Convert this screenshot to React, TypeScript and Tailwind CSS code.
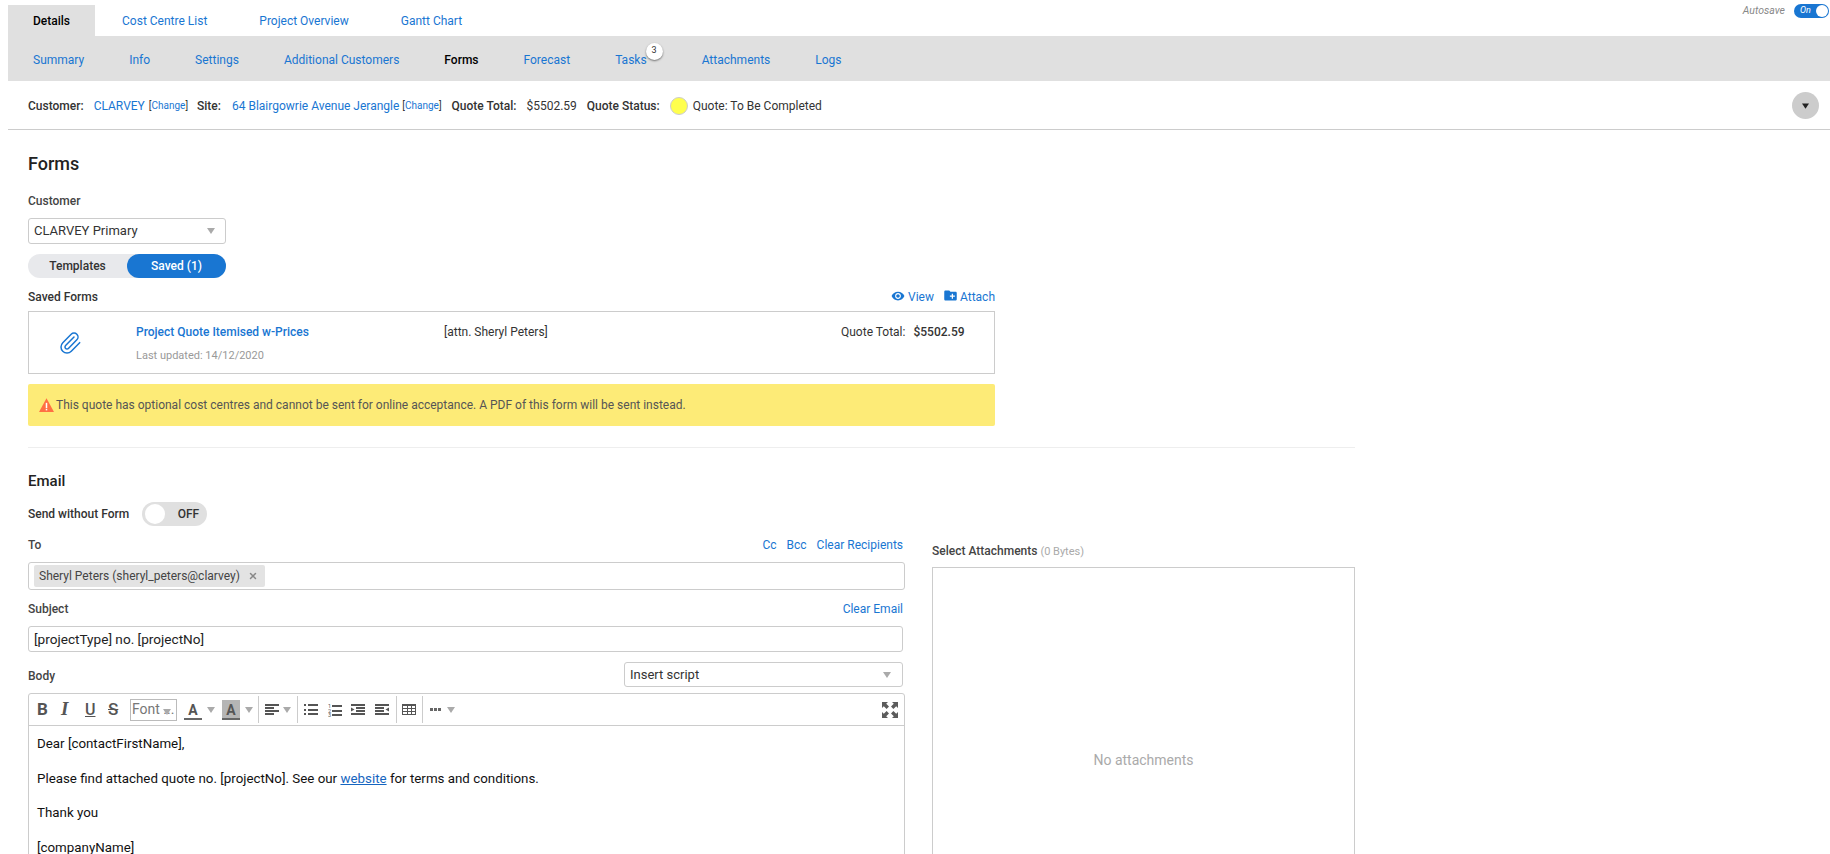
import { MdRemoveRedEye, MdCreateNewFolder } from "react-icons/md";
import { Paperclip, X } from "lucide-react";

const subTabs = ["Summary", "Info", "Settings", "Additional Customers", "Forms", "Forecast", "Tasks", "Attachments", "Logs"];

function Caret({ className = "" }: { className?: string }) {
  return (
    <svg viewBox="0 0 8 6" className={`h-[6px] w-[8px] shrink-0 ${className}`} fill="#aaa">
      <path d="M0 0h8L4 6z" />
    </svg>
  );
}

function Sep({ className = "" }: { className?: string }) {
  return <div className={`h-[27px] w-px shrink-0 bg-[#ccc] ${className}`} />;
}

function AlignIcon() {
  return (
    <svg viewBox="0 0 14 11" className="ml-[6px] h-[11px] w-[14px] shrink-0" fill="#555" shapeRendering="crispEdges">
      <path d="M0 0h14v2H0zM0 3h9v2H0zM0 6h14v2H0zM0 9h9v2H0z" />
    </svg>
  );
}

function BulletIcon() {
  return (
    <svg viewBox="0 0 14 11" className="ml-[6px] h-[11px] w-[14px] shrink-0" fill="#555" shapeRendering="crispEdges">
      <path d="M0 0h2v2H0zM4 0h10v2H4zM0 4.5h2v2H0zM4 4.5h10v2H4zM0 9h2v2H0zM4 9h10v2H4z" />
    </svg>
  );
}

function NumberIcon() {
  return (
    <svg viewBox="0 0 14 14" className="ml-[10px] h-[14px] w-[14px] shrink-0" fill="#555">
      <path d="M4 2h10v2H4zM4 6.5h10v2H4zM4 11h10v2H4z" shapeRendering="crispEdges" />
      <text x="0" y="5" fontSize="5.5" fontFamily="Roboto, sans-serif">1</text>
      <text x="0" y="9.5" fontSize="5.5" fontFamily="Roboto, sans-serif">2</text>
      <text x="0" y="14" fontSize="5.5" fontFamily="Roboto, sans-serif">3</text>
    </svg>
  );
}

function IndentIcon({ className = "" }: { className?: string }) {
  return (
    <svg viewBox="0 0 14 11" className={`h-[11px] w-[14px] shrink-0 ${className}`} fill="#555" shapeRendering="crispEdges">
      <path d="M0 0h14v2H0zM5 3h9v2H5zM5 6h9v2H5zM0 9h14v2H0z" />
      <path d="M0 3.5 3.5 5.5 0 7.5z" shapeRendering="auto" />
    </svg>
  );
}

function OutdentIcon({ className = "" }: { className?: string }) {
  return (
    <svg viewBox="0 0 14 11" className={`h-[11px] w-[14px] shrink-0 ${className}`} fill="#555" shapeRendering="crispEdges">
      <path d="M0 0h14v2H0zM0 3h9v2H0zM0 6h9v2H0zM0 9h14v2H0z" />
      <path d="M14 3.5 10.5 5.5 14 7.5z" shapeRendering="auto" />
    </svg>
  );
}

function TableIcon() {
  return (
    <svg viewBox="0 0 14 11" className="ml-[5px] h-[11px] w-[14px] shrink-0" fill="none" stroke="#555" strokeWidth="1" shapeRendering="crispEdges">
      <rect x="0.5" y="0.5" width="13" height="10" />
      <path d="M0 4h14M0 7.5h14M5 0v11M9.5 0v11" />
      <rect x="0" y="0" width="14" height="2" fill="#555" stroke="none" />
    </svg>
  );
}

function DotsIcon() {
  return (
    <svg viewBox="0 0 11 3" className="ml-[7px] h-[3px] w-[11px] shrink-0" fill="#666" shapeRendering="crispEdges">
      <path d="M0 0h3v3H0zM4 0h3v3H4zM8 0h3v3H8z" />
    </svg>
  );
}

function ExpandIcon() {
  return (
    <svg viewBox="0 0 16 16" className="ml-auto h-[16px] w-[16px] shrink-0" fill="#5c5c5c">
      <path d="M0 0h6L4.2 1.8 7 4.6 4.6 7 1.8 4.2 0 6z" />
      <path d="M16 0h-6l1.8 1.8L9 4.6 11.4 7l2.8-2.8L16 6z" />
      <path d="M0 16h6l-1.8-1.8L7 11.4 4.6 9l-2.8 2.8L0 10z" />
      <path d="M16 16h-6l1.8-1.8L9 11.4 11.4 9l2.8 2.8L16 10z" />
    </svg>
  );
}

function Toolbar() {
  return (
    <div className="flex h-[32px] items-center border-b border-[#ccc] pl-[8px] pr-[6px] text-[#555]">
      <span className="w-[23px] shrink-0 text-[17px] font-bold">B</span>
      <span className="w-[25px] shrink-0 pl-[1px] text-[19px] font-bold italic [font-family:'Liberation_Serif',serif]">I</span>
      <span className="w-[23px] shrink-0 text-[16px] font-medium underline">U</span>
      <span className="w-[22px] shrink-0 text-[17px] font-medium line-through">S</span>
      <div className="relative flex h-[22px] w-[47px] shrink-0 items-center overflow-hidden border border-[#bbb] pl-[1px] text-[14px] whitespace-nowrap text-[#777]">
        Font ...
        <Caret className="absolute right-[5px] top-[9px]" />
      </div>
      <div className="ml-[7px] flex h-[20px] w-[18px] shrink-0 flex-col items-center justify-end text-[14px] leading-[16px] font-bold">
        A
        <div className="h-[2px] w-full bg-[#666]" />
      </div>
      <Caret className="ml-[5px]" />
      <div className="ml-[7px] flex h-[20px] w-[18px] shrink-0 flex-col items-center justify-end bg-[#b5b5b5] text-[14px] leading-[16px] font-bold">
        A
        <div className="h-[2px] w-full bg-[#666]" />
      </div>
      <Caret className="ml-[5px]" />
      <Sep className="ml-[5px]" />
      <AlignIcon />
      <Caret className="ml-[4px]" />
      <Sep className="ml-[6px]" />
      <BulletIcon />
      <NumberIcon />
      <IndentIcon className="ml-[9px]" />
      <OutdentIcon className="ml-[10px]" />
      <Sep className="ml-[7px]" />
      <TableIcon />
      <Sep className="ml-[6px]" />
      <DotsIcon />
      <Caret className="ml-[6px]" />
      <ExpandIcon />
    </div>
  );
}

export default function App() {
  return (
    <div className="h-screen overflow-hidden bg-white pl-2 text-[12px] text-[#333] [font-family:Roboto,sans-serif]">
      {/* top tabs */}
      <div className="flex h-[36px] items-start justify-between pr-px">
        <div className="mt-[5px] flex h-[31px] gap-[2px]">
          <div className="flex items-center bg-[#e0e0e0] px-[25px] font-medium text-black">Details</div>
          <div className="flex items-center px-[25px] text-[#1976d2]">Cost Centre List</div>
          <div className="flex items-center px-[25px] text-[#1976d2]">Project Overview</div>
          <div className="flex items-center px-[25px] text-[#1976d2]">Gantt Chart</div>
        </div>
        <div className="mt-[3px] flex items-center gap-[9px]">
          <span className="text-[10.5px] italic text-[#888]">Autosave</span>
          <div className="flex h-[14px] w-[35px] items-center justify-between rounded-full bg-[#1976d2] pl-[6px] pr-[1px]">
            <span className="text-[9px] italic text-white">On</span>
            <div className="h-[12px] w-[12px] rounded-full bg-white" />
          </div>
        </div>
      </div>

      {/* sub tabs */}
      <div className="flex h-[45px] items-center gap-[45px] bg-[#e0e0e0] pl-[25px] pt-[2px]">
        {subTabs.map((t) => (
          <div key={t} className={t === "Forms" ? "relative font-medium text-black" : t === "Tasks" ? "relative mr-[10px] text-[#1976d2]" : "relative text-[#1976d2]"}>
            {t}
            {t === "Tasks" && (
              <span className="absolute -top-[8px] -right-[16px] flex h-[17px] w-[17px] items-center justify-center rounded-full bg-white text-[9px] text-[#333] shadow-[0_1px_2px_rgba(0,0,0,0.5)]">
                3
              </span>
            )}
          </div>
        ))}
      </div>

      {/* quote info */}
      <div className="flex h-[49px] items-center border-b border-[#ccc] pl-[20px] pr-[11px] pt-[1px]">
        <span className="font-medium text-[#333]">Customer:</span>
        <span className="ml-[10px] text-[#1976d2]">CLARVEY</span>
        <span className="ml-[4px] text-[10px]">[<span className="text-[#1976d2]">Change</span>]</span>
        <span className="ml-[9px] font-medium text-[#333]">Site:</span>
        <span className="ml-[11px] text-[#1976d2]">64 Blairgowrie Avenue Jerangle</span>
        <span className="ml-[3px] text-[10px]">[<span className="text-[#1976d2]">Change</span>]</span>
        <span className="ml-[10px] font-medium text-[#333]">Quote Total:</span>
        <span className="ml-[10px]">$5502.59</span>
        <span className="ml-[10px] font-medium text-[#333]">Quote Status:</span>
        <div className="ml-[10px] h-[18px] w-[18px] rounded-full border border-[#ccc] bg-[#ffff4d]" />
        <span className="ml-[5px]">Quote: To Be Completed</span>
        <div className="ml-auto flex h-[27px] w-[27px] items-center justify-center rounded-full bg-[#ccc]">
          <svg viewBox="0 0 8 6" className="h-[6px] w-[7px]" fill="#222"><path d="M0 0h8L4 6z" /></svg>
        </div>
      </div>

      <div className="pl-[20px]">
        {/* forms section */}
        <div className="w-[967px]">
          <h1 className="mt-[21px] text-[18px] leading-[26px] font-medium text-[#222]">Forms</h1>
          <div className="mt-[17px] leading-[14px] font-medium text-[#444]">Customer</div>
          <div className="mt-[10px] flex h-[26px] w-[198px] items-center justify-between rounded-[3px] border border-[#ccc] pl-[5px] pr-[10px] text-[13px]">
            CLARVEY Primary
            <Caret />
          </div>
          <div className="mt-[10px] flex h-[24px] w-[198px] rounded-full bg-[#e8e9ec] font-medium">
            <div className="flex w-[99px] items-center justify-center text-[#333]">Templates</div>
            <div className="flex w-[99px] items-center justify-center rounded-full bg-[#1976d2] text-white">Saved (1)</div>
          </div>
          <div className="mt-[11px] flex h-[15px] items-center justify-between">
            <span className="font-medium text-[#333]">Saved Forms</span>
            <div className="flex items-center text-[#1976d2]">
              <MdRemoveRedEye size={14} className="-mt-[2px]" />
              <span className="ml-[3px]">View</span>
              <MdCreateNewFolder size={15} className="-mt-[2px] ml-[9px]" />
              <span className="ml-[2px]">Attach</span>
            </div>
          </div>
          <div className="mt-[7px] flex h-[63px] border border-[#ccc]">
            <div className="flex w-[107px] items-center pl-[29px] text-[#1976d2]">
              <Paperclip size={24} strokeWidth={1.5} />
            </div>
            <div className="w-[308px] pt-[11px]">
              <div className="font-medium text-[#1976d2]">Project Quote Itemised w-Prices</div>
              <div className="mt-[7px] text-[11px] text-[#999]">Last updated: 14/12/2020</div>
            </div>
            <div className="w-[397px] pt-[11px]">[attn. Sheryl Peters]</div>
            <div className="pt-[11px]">Quote Total:</div>
            <div className="ml-[8px] pt-[11px] font-medium">$5502.59</div>
          </div>
          <div className="mt-[10px] flex h-[42px] items-center rounded-[2px] bg-[#fdeb77] pl-[11px] text-[#555]">
            <svg viewBox="0 0 14 13" className="h-[14px] w-[15px]" fill="#ff7043">
              <path d="M7 0.3 14 13H0z" />
              <rect x="6.3" y="4.5" width="1.4" height="4.8" fill="#fff" />
              <rect x="6.3" y="10" width="1.4" height="1.5" fill="#fff" />
            </svg>
            <span className="ml-[2px]">This quote has optional cost centres and cannot be sent for online acceptance. A PDF of this form will be sent instead.</span>
          </div>
        </div>

        <div className="mt-[21px] h-px w-[1327px] bg-[#eee]" />

        {/* email section */}
        <h2 className="mt-[24px] text-[15px] leading-[18px] font-medium text-[#222]">Email</h2>
        <div className="mt-[12px] flex h-[24px] items-center">
          <span className="font-medium text-[#333]">Send without Form</span>
          <div className="ml-[13px] flex h-[24px] w-[65px] items-center justify-between rounded-full bg-[#e0e0e0] pl-[3px] pr-[8px]">
            <div className="h-[20px] w-[20px] rounded-full bg-white" />
            <span className="font-medium text-[#333]">OFF</span>
          </div>
        </div>

        <div className="mt-[10px] flex w-[1327px] justify-between">
          <div className="w-[877px]">
            <div className="flex h-[16px] items-center justify-between pr-[2px] pt-[2px]">
              <span className="font-medium text-[#444]">To</span>
              <div className="flex gap-[10px] text-[#1976d2]">
                <span>Cc</span>
                <span>Bcc</span>
                <span>Clear Recipients</span>
              </div>
            </div>
            <div className="mt-[10px] flex h-[28px] items-center rounded-[3px] border border-[#ccc] pl-[5px]">
              <div className="flex h-[22px] items-center rounded-[2px] bg-[#e3e3e3] pl-[5px] pr-[7px] text-[#444]">
                Sheryl Peters (sheryl_peters@clarvey)
                <X size={10} strokeWidth={3.5} className="ml-[8px] text-[#888]" />
              </div>
            </div>
            <div className="mt-[10px] flex h-[16px] w-[875px] items-center justify-between pt-[2px]">
              <span className="font-medium text-[#444]">Subject</span>
              <span className="text-[#1976d2]">Clear Email</span>
            </div>
            <div className="mt-[10px] flex h-[26px] w-[875px] items-center rounded-[3px] border border-[#ccc] pl-[5px] text-[13.6px] text-[#222]">
              [projectType] no. [projectNo]
            </div>
            <div className="mt-[10px] flex w-[875px] items-center justify-between">
              <span className="mt-[3px] font-medium text-[#444]">Body</span>
              <div className="flex h-[25px] w-[279px] items-center justify-between rounded-[3px] border border-[#ccc] pl-[5px] pr-[11px] text-[13px]">
                Insert script
                <Caret />
              </div>
            </div>
            <div className="mt-[6px] rounded-t-[3px] border border-[#ccc]">
              <Toolbar />
              <div className="flex h-[300px] flex-col gap-[17.5px] px-[8px] pt-[9px] text-[13.33px] leading-[17px] text-[#111]">
                <div>Dear [contactFirstName],</div>
                <div>
                  Please find attached quote no. [projectNo]. See our{" "}
                  <span className="text-[#1565c0] underline">website</span> for terms and conditions.
                </div>
                <div>Thank you</div>
                <div>[companyName]</div>
              </div>
            </div>
          </div>
          <div className="mt-[6px] w-[423px]">
            <div className="h-[16px]">
              <span className="font-medium text-[#444]">Select Attachments</span>{" "}
              <span className="text-[11px] text-[#aaa]">(0 Bytes)</span>
            </div>
            <div className="mt-[9px] flex h-[386px] items-center justify-center border border-[#ccc] text-[14px] text-[#aaa]">
              No attachments
            </div>
          </div>
        </div>
      </div>
    </div>
  );
}
